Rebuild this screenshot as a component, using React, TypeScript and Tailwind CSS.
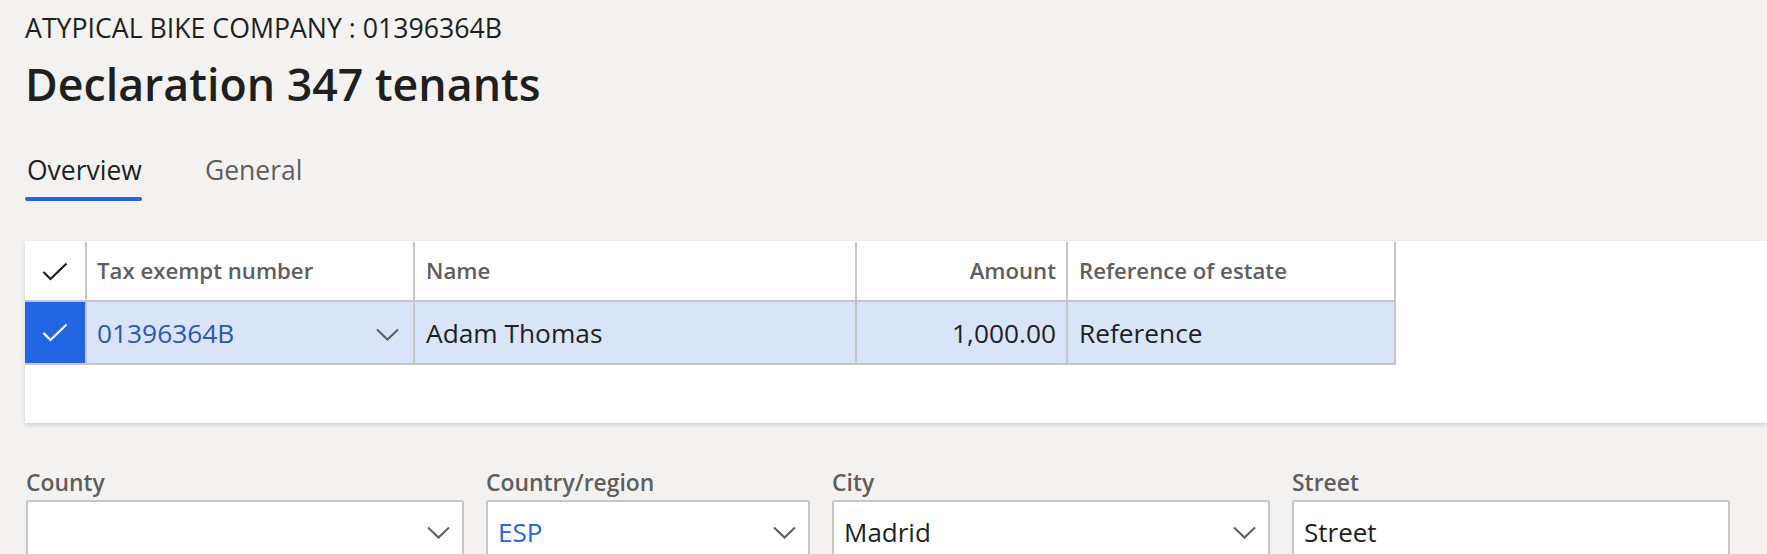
import React from "react";

const Chevron = ({ className = "" }: { className?: string }) => (
  <svg width="23" height="13" viewBox="0 0 23 13" className={className} fill="none">
    <path d="M1 1.5 L11.5 11.5 L22 1.5" stroke="#605e5c" strokeWidth="2" />
  </svg>
);

const Check = ({ color }: { color: string }) => (
  <svg width="26" height="19" viewBox="0 0 26 19" fill="none">
    <path d="M1.5 10 L8.5 17 L24.5 1.5" stroke={color} strokeWidth="2.2" />
  </svg>
);

export default function App() {
  return (
    <div className="w-[1767px] h-[554px] overflow-hidden bg-[#f3f2f1] font-['Open_Sans',sans-serif] text-[#201f1e]">
      <div className="pl-[25px]">
        <div className="pt-[10px] h-[46px] text-[26.7px] leading-[36px] text-[#201f1e]">
          ATYPICAL BIKE COMPANY : 01396364B
        </div>
        <div className="mt-[8px] h-[60px] text-[44.7px] leading-[60px] font-semibold text-[#201f1e]">
          Declaration 347 tenants
        </div>
        <div className="mt-[38px] flex gap-[61px]">
          <div className="flex flex-col items-start">
            <div className="px-[2px] text-[26.5px] leading-[36px] text-[#201f1e]">Overview</div>
            <div className="mt-[9px] h-[4px] w-[117px] rounded-full bg-[#2266e3]" />
          </div>
          <div className="text-[26.5px] leading-[36px] text-[#605e5c]">General</div>
        </div>
      </div>

      <div className="mt-[40px] ml-[25px] h-[182px] bg-white shadow-[0_2px_4px_rgba(0,0,0,0.14)]">
        <div className="flex h-[61px] w-[1371px] border-b-2 border-[#c8c6c4] pt-[1px] text-[22.2px] font-semibold text-[#605e5c]">
          <div className="flex w-[62px] items-center justify-center border-r-2 border-[#c8c6c4]">
            <Check color="#201f1e" />
          </div>
          <div className="flex w-[328px] items-center border-r-2 border-[#c8c6c4] pl-[10px]">Tax exempt number</div>
          <div className="flex w-[442px] items-center border-r-2 border-[#c8c6c4] pl-[11px]">Name</div>
          <div className="flex w-[211px] items-center justify-end border-r-2 border-[#c8c6c4] pr-[10px]">Amount</div>
          <div className="flex w-[328px] items-center border-r-2 border-[#c8c6c4] pl-[11px]">Reference of estate</div>
        </div>
        <div className="flex h-[63px] w-[1371px] border-b-2 border-[#c8c6c4] bg-[#d9e4f8] text-[26.3px]">
          <div className="flex w-[62px] items-center justify-center border-r-2 border-[#c8c6c4] bg-[#2266e3]">
            <Check color="#ffffff" />
          </div>
          <div className="flex w-[328px] items-center justify-between border-r-2 border-[#c8c6c4] pl-[10px] pr-[14px] pt-[3px] text-[#2a57b5]">
            <span>01396364B</span>
            <Chevron />
          </div>
          <div className="flex w-[442px] items-center border-r-2 border-[#c8c6c4] pl-[11px] pt-[3px]">Adam Thomas</div>
          <div className="flex w-[211px] items-center justify-end border-r-2 border-[#c8c6c4] pr-[10px] pt-[3px]">1,000.00</div>
          <div className="flex w-[328px] items-center border-r-2 border-[#c8c6c4] pl-[11px] pt-[3px]">Reference</div>
        </div>
      </div>

      <div className="mt-[45px] ml-[26px] flex gap-[22px]">
        {[
          { label: "County", w: "w-[438px]", value: "", chevron: true, blue: false },
          { label: "Country/region", w: "w-[324px]", value: "ESP", chevron: true, blue: true },
          { label: "City", w: "w-[438px]", value: "Madrid", chevron: true, blue: false },
          { label: "Street", w: "w-[438px]", value: "Street", chevron: false, blue: false },
        ].map((f) => (
          <div key={f.label} className={`${f.w} flex flex-col`}>
            <div className="h-[30px] text-[22.9px] leading-[30px] font-semibold text-[#605e5c]">{f.label}</div>
            <div className="mt-[2px] flex h-[64px] items-center justify-between rounded-[3px] border-2 border-[#c8c6c4] bg-white pl-[10px] pr-[12px]">
              <span className={`text-[26px] leading-[36px] ${f.blue ? "text-[#2266e3]" : "text-[#201f1e]"}`}>{f.value}</span>
              {f.chevron ? <Chevron /> : null}
            </div>
          </div>
        ))}
      </div>
    </div>
  );
}
